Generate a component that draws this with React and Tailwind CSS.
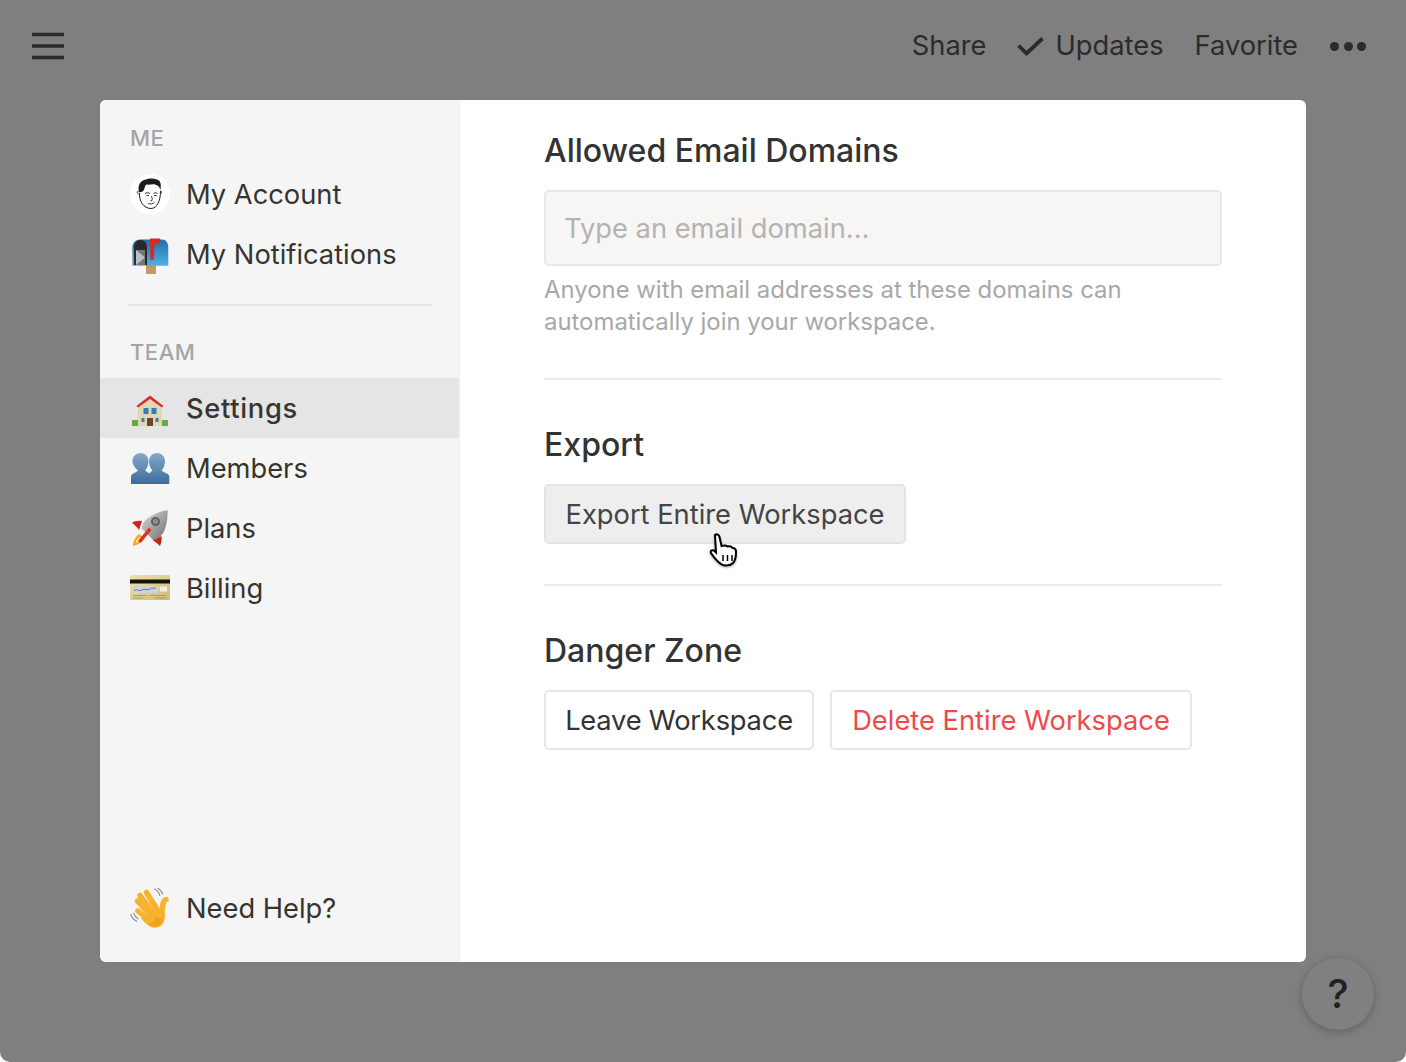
import React from 'react';

const FONT = { fontFamily: 'Inter, "Noto Sans", sans-serif' };

const FaceIcon = () => (
  <svg viewBox="0 0 40 40" className="w-10 h-10">
    <circle cx="20" cy="20" r="20" fill="#fff" />
    <path d="M9.500 19c-.5 8 4 15.500 11.500 15.500 6 0 9.500-7.500 9.500-17.500" fill="#fff" stroke="#222" strokeWidth="1" />
    <path d="M8.500 20c-1.500-.5-1.500-3 0-2.500M30.500 17c1-.5 1 2 0 3" stroke="#222" strokeWidth="1" fill="none" />
    <path d="M9 18c-1.500-6 1-10.500 5-12 5-2.500 13-2 15.500 1 1.500 2 1.500 5 1 9-1-3-2.500-5-5.500-5.500-3-.5-6 .5-8.500 0-2 1-1.500 4-3 6-1 1.500-3 2-4.500 1.500z" fill="#1c1c1c" />
    <path d="M15 19.500c1.500-1 3.500-1 5 0M23.500 19.500c1-1 3-1 4 0" stroke="#222" strokeWidth="1" fill="none" />
    <path d="M16.500 21.500h2.500M24 21.500h2.500" stroke="#333" strokeWidth="1" />
    <path d="M21.500 22c.5 2 1 3.500.5 4.500l-1.500.3M18 29.500c2 .8 4.500.5 6.500-1" stroke="#222" strokeWidth=".9" fill="none" />
  </svg>
);

const MailboxIcon = () => (
  <svg viewBox="0 0 40 40" className="w-10 h-10">
    <defs>
      <linearGradient id="box" x1="0" y1="0" x2="0" y2="1">
        <stop offset="0" stopColor="#1f6fa8" />
        <stop offset="1" stopColor="#55ade6" />
      </linearGradient>
    </defs>
    <rect x="16" y="31" width="10" height="9" fill="#c09a68" />
    <path d="M10 5.500h22c4 0 6.300 3.500 6.300 8v18.200H2.300V13.500c0-4 3-8 7.700-8z" fill="url(#box)" />
    <path d="M4 31V13c0-4 2.500-7 6.500-7s6.500 3 6.500 7v18z" fill="#2a2a2a" />
    <path d="M6 31V16l9 7.500-9 7.500z" fill="#d4d6d8" />
    <path d="M6 31V16h9v15z" fill="#a9adb1" opacity=".6" />
    <path d="M20 4.500h10v5h-5.500l-.8 16.500H20.500z" fill="#e1251c" />
  </svg>
);

const HouseIcon = () => (
  <svg viewBox="0 0 40 40" className="w-10 h-10">
    <rect x="2" y="32" width="36" height="6" rx="1" fill="#62a843" />
    <path d="M8 18L20 9l12 9v20H8z" fill="#e3d6b6" />
    <path d="M6.500 18L20 7.500 33.500 18 32 19.500 20 11 8 19.500z" fill="#cf2f26" />
    <rect x="13.500" y="20" width="5" height="6" fill="#2f7dc4" />
    <rect x="21.500" y="20" width="5" height="6" fill="#2f7dc4" />
    <rect x="11.500" y="30" width="3" height="4" fill="#3a7db8" />
    <rect x="25.500" y="30" width="3" height="4" fill="#3a7db8" />
    <rect x="17" y="30" width="6" height="8" fill="#6a4630" />
  </svg>
);

const MembersIcon = () => (
  <svg viewBox="0 0 40 40" className="w-10 h-10">
    <defs>
      <linearGradient id="mem" x1="0" y1="0" x2="0" y2="1">
        <stop offset="0" stopColor="#86a9cb" />
        <stop offset="1" stopColor="#3c6a9d" />
      </linearGradient>
    </defs>
    <path d="M10.500 5c4.500 0 8 3.500 8 8.500 0 3.500-1.500 7-3.500 9l4.500 3c.5-1 2-2 3-3-2-2-3.500-5.500-3.500-9 0-5 3.500-8.500 8-8.500s8 3.500 8 8.500c0 3.500-1.500 7-3.500 9 2.500 2.500 7.500 2.500 7.800 6v7.500H1v-7.500c.5-3.500 5-3.500 7-6-2-2-5.500-5.500-5.500-9C2.500 8.500 6 5 10.500 5z" fill="url(#mem)" />
  </svg>
);

const RocketIcon = () => (
  <svg viewBox="0 0 40 40" className="w-10 h-10">
    <defs>
      <linearGradient id="rkt" x1="0" y1="0" x2="1" y2="1">
        <stop offset="0" stopColor="#dcdcdc" />
        <stop offset="1" stopColor="#6e6e6e" />
      </linearGradient>
    </defs>
    <path d="M3 38c0-5 2-9 6-12l6 5c-3 3-7 6-12 7z" fill="#f6a821" />
    <path d="M5.500 35c.5-2.500 2-4.500 4-6l2.500 2c-2 2-4 3.500-6.500 4z" fill="#fde9a6" />
    <path d="M2 15c2-2 6-2.500 10-2l-3 9c-2-3-4-5-7-7zM30 38c1.500-3 2-7 1.500-10l-9 4c3 2 5.500 4 7.500 6z" fill="#c8261c" />
    <path d="M37.700 2c-9 1.500-17.700 5.500-23 11-2 2.500-3 5-3 7.500l11.500 11.500c3-.5 5.500-2 7.500-4 5.500-5.500 7-16.500 7-26z" fill="url(#rkt)" />
    <circle cx="25.500" cy="13.500" r="4.500" fill="#5d5d5d" />
    <circle cx="25.500" cy="13.500" r="2.700" fill="#8e8e8e" />
    <path d="M8 33l11-13.500 2.500 2.500L10.500 35z" fill="#d8322a" />
  </svg>
);

const CardIcon = () => (
  <svg viewBox="0 0 40 40" className="w-10 h-10">
    <defs>
      <linearGradient id="crd" x1="0" y1="0" x2="1" y2="1">
        <stop offset="0" stopColor="#efe2a8" />
        <stop offset="1" stopColor="#cdbb7c" />
      </linearGradient>
    </defs>
    <rect x="0" y="7" width="40" height="25" rx="1.500" fill="url(#crd)" />
    <rect x="0" y="11.500" width="40" height="4" fill="#111" />
    <rect x="3" y="18.500" width="25" height="6.500" fill="#c9d4de" />
    <path d="M4 23c3-3 5 1 8-1s5 1 8-1 3 0 6-1" stroke="#3f639a" strokeWidth=".8" fill="none" />
    <rect x="30" y="18.500" width="7" height="5" fill="#f3f0e0" />
    <path d="M3 27.500h14M3 30h10M20 27.500h16M24 30h12" stroke="#ab9d63" strokeWidth="1" />
  </svg>
);

const WaveIcon = () => (
  <svg viewBox="0 0 40 40" className="w-10 h-10">
    <g stroke="#f7b32f" strokeWidth="5.500" strokeLinecap="round" fill="none">
      <path d="M8 23l12 10" />
      <path d="M7.500 13l14 15" />
      <path d="M10 7.500l13 17" />
      <path d="M16.500 4.500l10 16" />
      <path d="M36 11.500c-3 1-3.500 6-4 11" />
    </g>
    <path d="M17 25l17-6c2 8 1 14-2 18-3 3-9 4-13 1-3-2-6-5-8-8z" fill="#f7b32f" />
    <path d="M26 29c3 2 6 2 7.500 1-.5 4-4 8-9 8-3 0-5-1-7-2.500 4 0 7-2.500 8.500-6.500z" fill="#f0a21e" />
    <path d="M24 .8c2.500 1 5 3.500 6 7M27.500 0c2.500 1.300 4.500 3.500 5.500 6.500M.5 26c1 3 3.500 6 6.500 7.500M3.500 25c.8 2.500 2.500 4.500 5 6" stroke="#8d8d8d" strokeWidth="1.100" fill="none" />
  </svg>
);

const SideItem = ({ icon, label, active }) => (
  <div className={`flex items-center h-[60px] pl-[30px] ${active ? 'bg-[#e5e5e5]' : ''}`}>
    <span className="w-10 h-10 shrink-0">{icon}</span>
    <span className={`ml-4 text-[27.300px] translate-y-[1px] text-[#37352f] ${active ? 'font-medium tracking-[0.7px]' : ''}`}>{label}</span>
  </div>
);

const SideLabel = ({ children, className }) => (
  <div className={`pl-[30px] text-[22px] leading-[28px] font-medium tracking-[0.5px] text-[#a5a5a5] ${className}`}>{children}</div>
);

const Heading = ({ children, className }) => (
  <h2 className={`text-[32px] leading-[40px] font-medium text-[#333] ${className}`}>{children}</h2>
);

const Button = ({ children, className }) => (
  <button className={`h-[60px] pt-[2px] rounded-[5px] border-2 text-[27.300px] flex items-center justify-center ${className}`}>{children}</button>
);

export default function App() {
  return (
    <div className="relative w-[1406px] h-[1062px] bg-[#7f7f7f] rounded-b-[10px] overflow-hidden flex flex-col" style={FONT}>
      <header className="h-[100px] shrink-0 pb-[8px] pl-[32px] pr-[40px] flex items-center justify-between text-[27.300px] text-[#2b2b2b]">
        <svg width="32" height="28" viewBox="0 0 32 28" className="shrink-0">
          <path d="M0 2.500h32M0 14h32M0 25.500h32" stroke="#2b2b2b" strokeWidth="3.600" />
        </svg>
        <div className="flex items-center">
          <span>Share</span>
          <svg width="27" height="19" viewBox="0 0 27 19" className="ml-[31px] mr-[11px]">
            <path d="M1.500 8.500l8 8L25.500 1.500" stroke="#2b2b2b" strokeWidth="3.800" fill="none" />
          </svg>
          <span>Updates</span>
          <span className="ml-[31px]">Favorite</span>
          <span className="ml-[32px] flex gap-[4.500px]">
            <i className="w-[9px] h-[9px] rounded-full bg-[#2b2b2b]" />
            <i className="w-[9px] h-[9px] rounded-full bg-[#2b2b2b]" />
            <i className="w-[9px] h-[9px] rounded-full bg-[#2b2b2b]" />
          </span>
        </div>
      </header>

      <div className="mx-[100px] h-[862px] bg-white rounded-[6px] overflow-hidden flex">
        <aside className="w-[360px] shrink-0 bg-[#f5f5f5] border-r border-[#efefef] flex flex-col">
          <SideLabel className="mt-[24px] mb-[12px]">ME</SideLabel>
          <SideItem icon={<FaceIcon />} label="My Account" />
          <SideItem icon={<MailboxIcon />} label="My Notifications" />
          <div className="mt-[20px] ml-[28px] w-[304px] h-[2px] bg-[#e6e6e6]" />
          <SideLabel className="mt-[32px] mb-[12px]">TEAM</SideLabel>
          <SideItem icon={<HouseIcon />} label="Settings" active />
          <SideItem icon={<MembersIcon />} label="Members" />
          <SideItem icon={<RocketIcon />} label="Plans" />
          <SideItem icon={<CardIcon />} label="Billing" />
          <div className="mt-auto mb-[24px]">
            <SideItem icon={<WaveIcon />} label="Need Help?" />
          </div>
        </aside>

        <main className="flex-1 pl-[84px] pr-[84px] pt-[31px]">
          <Heading>Allowed Email Domains</Heading>
          <div className="mt-[19px] h-[76px] pt-[2px] rounded-[5px] border-2 border-[#e8e8e6] bg-[#f7f6f4] flex items-center pl-[18px] text-[27.300px] text-[#b3b3b1]">
            Type an email domain...
          </div>
          <p className="mt-[8px] text-[23.900px] leading-[32px] text-[#a8a8a8]">
            Anyone with email addresses at these domains can<br />automatically join your workspace.
          </p>
          <div className="mt-[40px] h-[2px] bg-[#ececec]" />
          <Heading className="mt-[45px]">Export</Heading>
          <Button className="mt-[19px] w-[362px] bg-[#eeeeee] border-[#e4e4e4] text-[#444]">Export Entire Workspace</Button>
          <div className="mt-[40px] h-[2px] bg-[#ececec]" />
          <Heading className="mt-[45px]">Danger Zone</Heading>
          <div className="mt-[19px] flex gap-4">
            <Button className="w-[270px] bg-white border-[#e6e6e6] text-[#333] tracking-[-0.2px]">Leave Workspace</Button>
            <Button className="w-[362px] bg-white border-[#e6e6e6] text-[#f0494b]">Delete Entire Workspace</Button>
          </div>
        </main>
      </div>

      {/* pointer over the export button */}
      <svg viewBox="0 0 32 38" className="absolute left-[708px] top-[533px] w-[32px] h-[38px] drop-shadow-[0_1px_1px_rgba(0,0,0,0.4)]">
        <path d="M7 2c2-1.500 4 0 4.500 2l2 9c3-1 5-.5 6 .5 2-.5 4 0 5 1.500 2 0 3.500 1.500 3.500 4 0 5-1 9-3 11-3 3-9 3-12 1-3-2-8-8-10-11-1-2 1-3.500 3-2.500l2 2z" fill="#fff" stroke="#000" strokeWidth="2" />
        <path d="M15 22v6M19.500 22v6M24 22v6" stroke="#000" strokeWidth="1.500" />
      </svg>

      <button className="absolute left-[1302px] top-[958px] w-[72px] h-[72px] rounded-full bg-[#808080] shadow-[0_2px_8px_rgba(0,0,0,0.25)] text-[40px] font-medium text-[#222] flex items-center justify-center">?</button>
    </div>
  );
}
